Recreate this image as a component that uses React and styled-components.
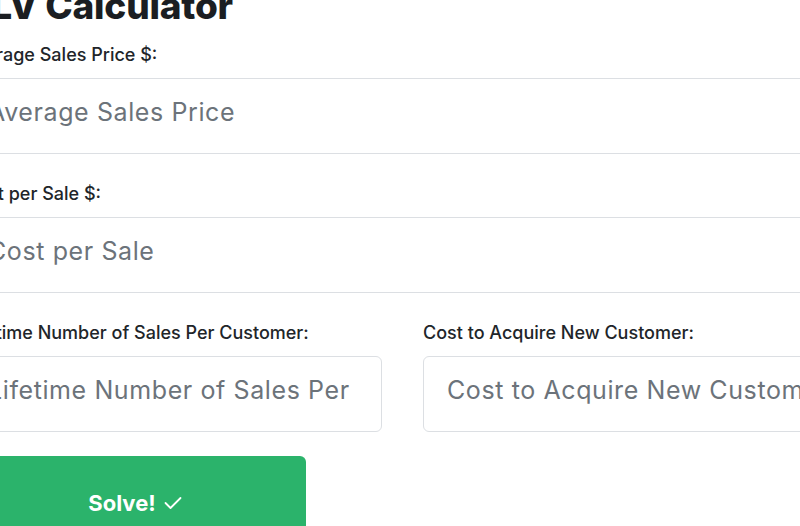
import React from 'react';
import styled, { createGlobalStyle } from 'styled-components';

const GlobalStyle = createGlobalStyle`
  body {
    margin: 0;
    background: #ffffff;
    font-family: Inter, "Noto Sans", sans-serif;
  }
`;

const Viewport = styled.div`
  width: 800px;
  height: 526px;
  overflow: hidden;
`;

const Form = styled.form`
  width: 877px;
  margin: -16px 0 0 -36px;
  display: flex;
  flex-direction: column;
`;

const Title = styled.h1`
  margin: 0 0 17px;
  font-size: 37px;
  line-height: 44px;
  font-weight: 800;
  color: #1b1e22;
  letter-spacing: -0.2px;
`;

const Field = styled.div`
  display: flex;
  flex-direction: column;
  gap: 13px;
  margin-bottom: ${p => p.$last ? '24px' : '30px'};
`;

const Row = styled.div`
  display: grid;
  grid-template-columns: 1fr 1fr;
  column-gap: 41px;
`;

const Label = styled.label`
  font-size: 18px;
  line-height: 20px;
  font-weight: 500;
  color: #212529;
`;

const Input = styled.input`
  box-sizing: border-box;
  width: 100%;
  height: 76px;
  padding: 0 23px 8px;
  border: 1.5px solid #dcdfe3;
  border-radius: 6px;
  font-family: Inter, "Noto Sans", sans-serif;
  font-size: 25px;
  letter-spacing: 0.6px;
  color: #212529;
  outline: none;

  &::placeholder {
    color: #6c737a;
  }
`;

const SolveButton = styled.button`
  width: 342px;
  height: 94px;
  border: none;
  border-radius: 6px;
  background: #2bb36b;
  color: #ffffff;
  font-family: Inter, "Noto Sans", sans-serif;
  font-size: 22px;
  font-weight: 700;
  display: flex;
  align-items: center;
  justify-content: center;
  gap: 8px;
`;

const Check = () => (
  <svg width="18" height="14" viewBox="0 0 18 14" fill="none">
    <polyline points="1.5,7 6.5,12 16.5,2" stroke="#ffffff" strokeWidth="1.8" strokeLinecap="round" strokeLinejoin="round" />
  </svg>
);

const App = () => (
  <Viewport>
    <GlobalStyle />
    <Form onSubmit={e => e.preventDefault()}>
      <Title>CLV Calculator</Title>
      <Field>
        <Label>Average Sales Price $:</Label>
        <Input placeholder="Average Sales Price" />
      </Field>
      <Field>
        <Label>Cost per Sale $:</Label>
        <Input placeholder="Cost per Sale" />
      </Field>
      <Row>
        <Field $last>
          <Label>Lifetime Number of Sales Per Customer:</Label>
          <Input placeholder="Lifetime Number of Sales Per Customer" />
        </Field>
        <Field $last>
          <Label>Cost to Acquire New Customer:</Label>
          <Input placeholder="Cost to Acquire New Customer" />
        </Field>
      </Row>
      <SolveButton type="submit">Solve! <Check /></SolveButton>
    </Form>
  </Viewport>
);

export default App;
